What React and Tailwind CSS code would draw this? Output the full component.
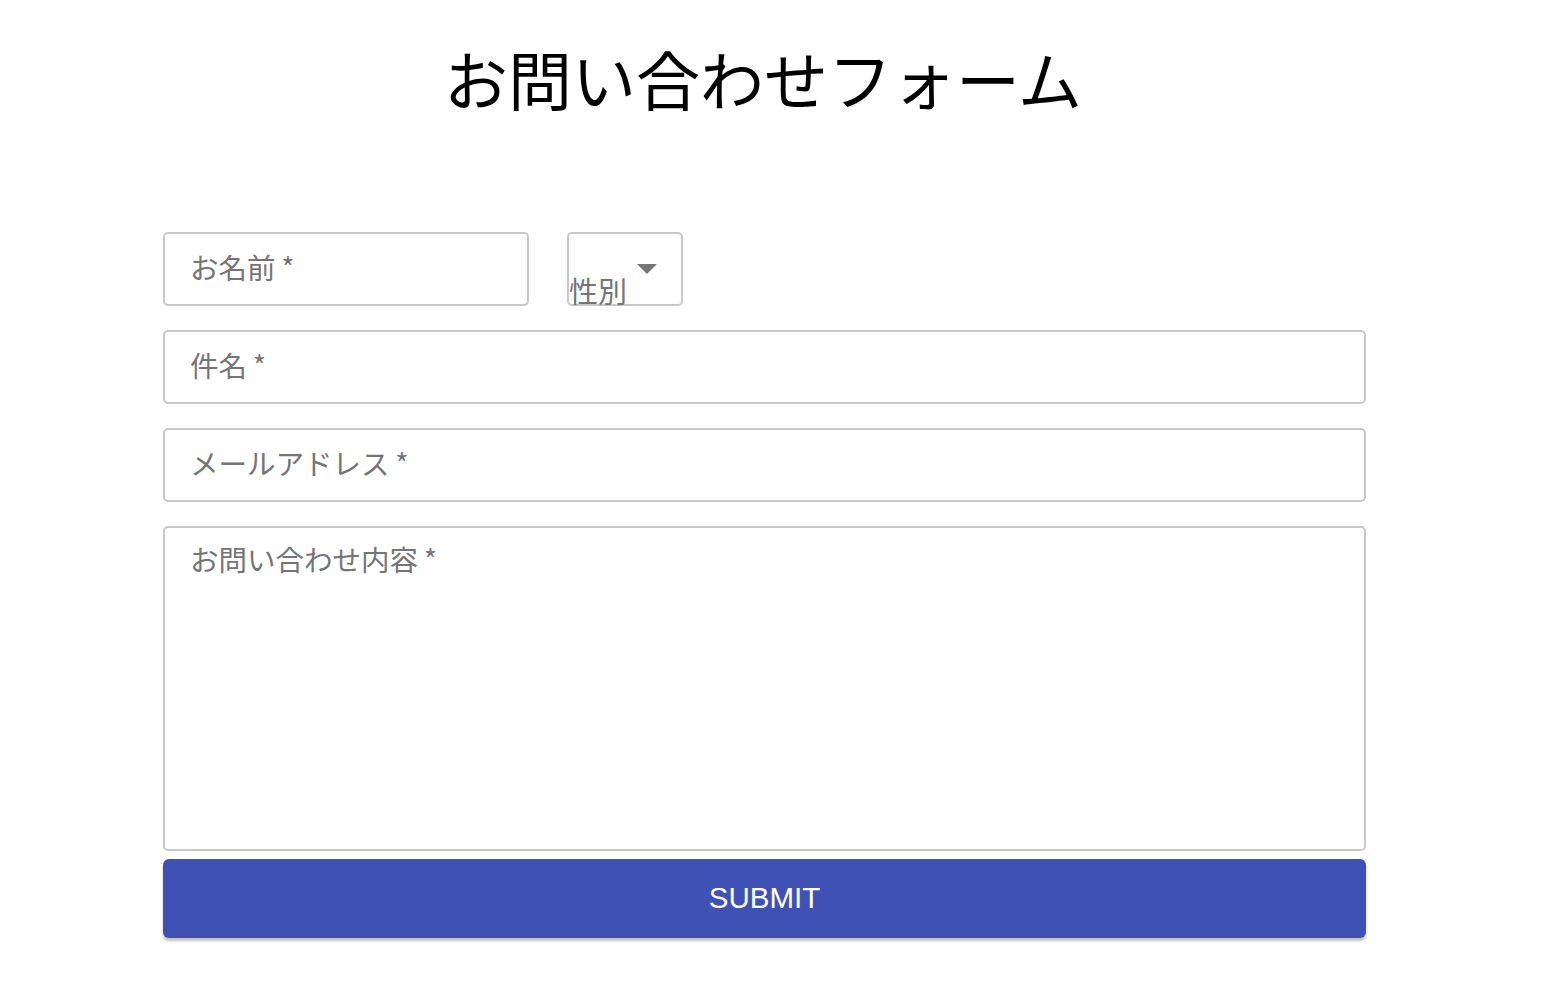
export default function App() {
  const font = { fontFamily: '"Noto Sans CJK JP", "Noto Sans", sans-serif' };
  return (
    <div className="min-h-screen bg-white" style={font}>
      <h1 className="pt-[32px] pr-[22px] text-center text-[64px] leading-[90px] font-normal text-black">
        お問い合わせフォーム
      </h1>
      <form className="mx-[163px] mt-[110px] w-[1203px] flex flex-col">
        <div className="flex items-start gap-[38px]">
          <div className="flex h-[74px] w-[366px] items-center rounded-[5px] border-2 border-[#c8c8c8] px-[25px] pb-[4px]">
            <span className="text-[28.5px] text-[#757575]">お名前{'\u2009'}*</span>
          </div>
          <div className="relative h-[74px] w-[116px] rounded-[5px] border-2 border-[#c8c8c8]">
            <span className="absolute left-0 bottom-[-4px] text-[29px] leading-[36px] text-[#757575]">性別</span>
            <svg className="absolute left-[68px] top-[30px]" width="20" height="10" viewBox="0 0 20 10">
              <path d="M0 0 L20 0 L10 10 Z" fill="#757575" />
            </svg>
          </div>
        </div>
        <div className="mt-[24px] flex h-[74px] items-center rounded-[5px] border-2 border-[#c8c8c8] px-[25px] pb-[4px]">
          <span className="text-[28.5px] text-[#757575]">件名{'\u2009'}*</span>
        </div>
        <div className="mt-[24px] flex h-[74px] items-center rounded-[5px] border-2 border-[#c8c8c8] px-[25px] pb-[4px]">
          <span className="text-[28.5px] text-[#757575]">メールアドレス{'\u2009'}*</span>
        </div>
        <div className="mt-[24px] h-[325px] rounded-[5px] border-2 border-[#c8c8c8] px-[25px] pt-[10px]">
          <span className="text-[28.5px] text-[#757575]">お問い合わせ内容{'\u2009'}*</span>
        </div>
        <button
          type="button"
          className="mt-[8px] h-[79px] w-full rounded-[6px] bg-[#3f51b5] text-[29.5px] text-white shadow-[0_3px_3px_rgba(0,0,0,0.25)]"
          style={{ fontFamily: '"Liberation Sans", Arial, sans-serif' }}
        >
          SUBMIT
        </button>
      </form>
    </div>
  );
}
